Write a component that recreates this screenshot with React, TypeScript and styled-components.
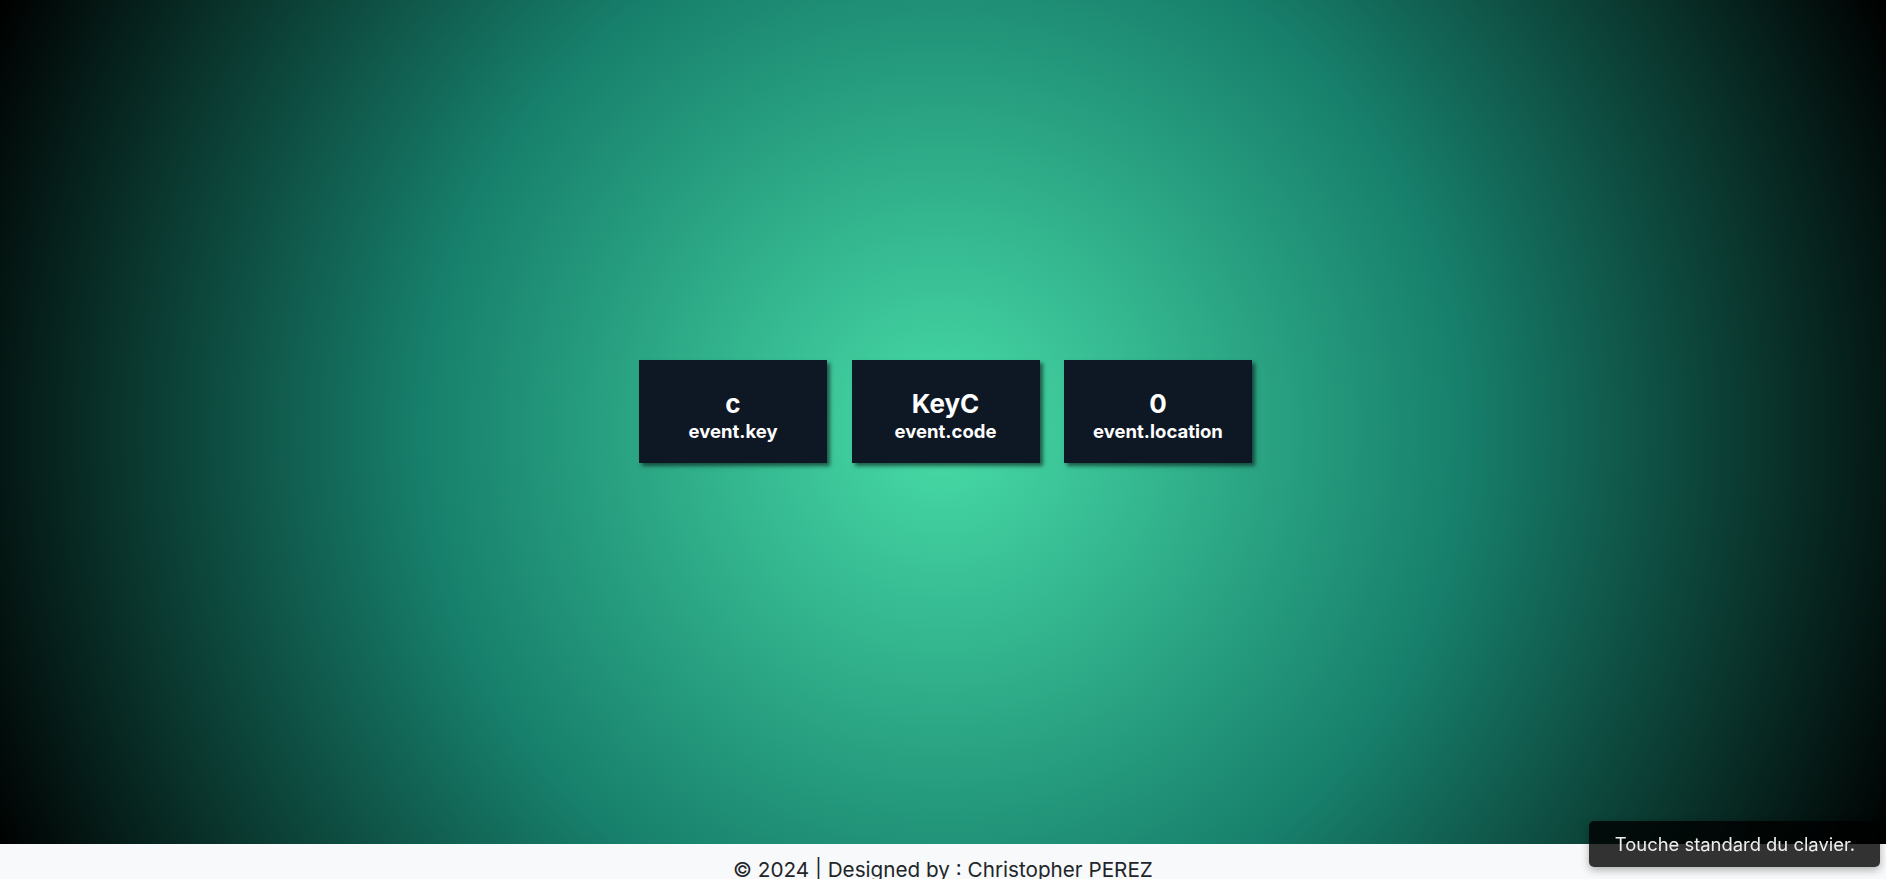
import React from "react";
import styled, { createGlobalStyle } from "styled-components";

const GlobalStyle = createGlobalStyle`
  html, body {
    margin: 0;
    padding: 0;
    overflow: hidden;
    font-family: Inter, "Open Sans", sans-serif;
  }
  * { box-sizing: border-box; }
`;

const Page = styled.div`
  display: flex;
  flex-direction: column;
  width: 100%;
`;

const Main = styled.main`
  height: 96vh;
  display: flex;
  align-items: center;
  justify-content: center;
  padding: 0 0 20px 5px;
  background: radial-gradient(circle at 50% 51%, #48dca7 0%, #17806c 50%, #000 100%);
`;

const CardRow = styled.div`
  display: flex;
  gap: 24.5px;
`;

const Card = styled.div`
  width: 188px;
  height: 103px;
  background: #0e1824;
  box-shadow: 3px 3px 4px rgba(0, 0, 0, 0.55);
  color: #fff;
  display: flex;
  flex-direction: column;
  align-items: center;
  justify-content: center;
  padding-top: 8px;
`;

const Value = styled.div`
  font-size: 26px;
  font-weight: 700;
  line-height: 30px;
`;

const Label = styled.div`
  font-size: 18.5px;
  font-weight: 700;
  line-height: 24px;
`;

const Footer = styled.footer`
  background: #f8f9fa;
  color: #212529;
  text-align: center;
  font-size: 20.7px;
  padding: 11px 0;
  line-height: 30px;
`;

const Toast = styled.div`
  position: fixed;
  right: 6px;
  bottom: 12px;
  height: 46px;
  padding: 0 25px 0 26px;
  display: flex;
  align-items: center;
  background: rgba(0, 0, 0, 0.8);
  color: #eee;
  border-radius: 5px;
  font-size: 18.4px;
  box-shadow: 0 3px 8px rgba(0, 0, 0, 0.3);
`;

const items = [
  { value: "c", label: "event.key" },
  { value: "KeyC", label: "event.code" },
  { value: "0", label: "event.location" },
];

export default function App() {
  return (
    <Page>
      <GlobalStyle />
      <Main>
        <CardRow>
          {items.map((it) => (
            <Card key={it.label}>
              <Value>{it.value}</Value>
              <Label>{it.label}</Label>
            </Card>
          ))}
        </CardRow>
      </Main>
      <Footer>© 2024 | Designed by : Christopher PEREZ</Footer>
      <Toast>Touche standard du clavier.</Toast>
    </Page>
  );
}
